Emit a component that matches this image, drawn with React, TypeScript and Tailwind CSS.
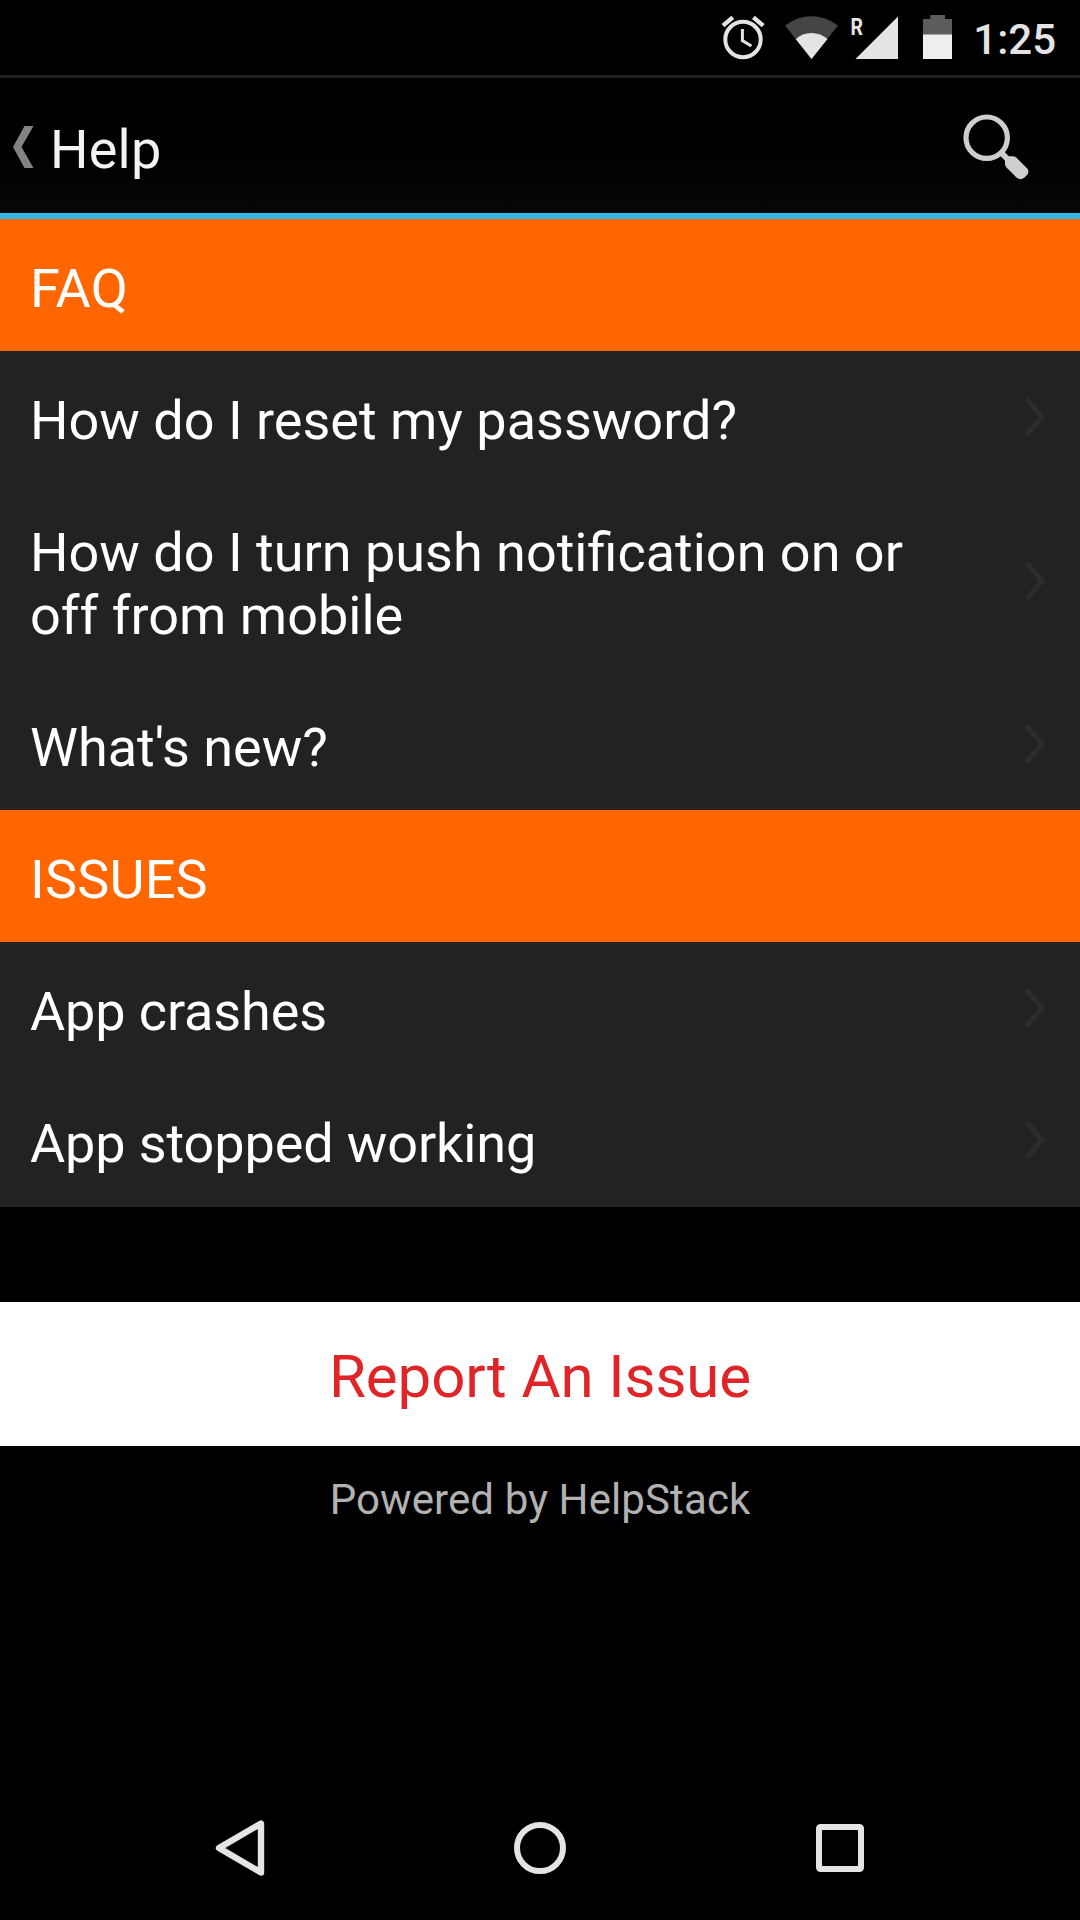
import React from "react";

function StatusBar() {
  return (
    <div className="flex h-[75px] justify-end bg-black">
      <svg className="h-[75px] w-[240px]" viewBox="0 0 240 75">
        {/* alarm */}
        <circle cx="23" cy="39.5" r="17.7" fill="none" stroke="#e4e4e4" strokeWidth="4" />
        <path d="M22.4 29v11.6l9 5.4" fill="none" stroke="#e4e4e4" strokeWidth="3" />
        <path d="M3 25.600L12.800 17.400M43.200 25.600L33.400 17.400" stroke="#e4e4e4" strokeWidth="4.4" />
        {/* wifi */}
        <path d="M91.5 59L65 25.5Q77.500 16.300 91.500 16.300Q105.500 16.300 118 25.500Z" fill="#454545" />
        <path d="M91.5 59L75.700 39Q82.500 33 91.500 33Q100.500 33 107.500 39Z" fill="#e4e4e4" />
        {/* signal */}
        <path d="M135.500 59L178 16.500V59Z" fill="#e4e4e4" />
        {/* battery */}
        <path d="M203 19h7.300v-4h14.700v4h7V35h-29Z" fill="#5c5c5c" />
        <path d="M203 34.500h29V59h-29Z" fill="#eeeeee" />
        <text x="130.500" y="35" fontFamily="Roboto" fontWeight="700" fontSize="24.500" textLength="12.500" lengthAdjust="spacingAndGlyphs" fill="#e4e4e4">R</text>
      </svg>
      <div className="mt-[15px] mr-[24px] ml-[13px] w-[83px] text-right text-[42px] leading-[49px] font-medium text-[#e4e4e4]">1:25</div>
    </div>
  );
}

function ActionBar() {
  return (
    <header className="flex h-[144px] items-start justify-between border-t-[3px] border-b-[6px] border-t-[#202020] border-b-[#33b5e5] bg-linear-to-b from-black to-[#050707]">
      <div className="flex items-start">
        <svg className="mt-[48px] ml-[12px] h-[42px] w-[22px]" viewBox="0 0 22 42">
          <path d="M12.500 0H21.500L9.500 21L21.500 42H12.500L1 21Z" fill="#838383" />
        </svg>
        <h1 className="mt-[40px] ml-[16px] text-[54px] leading-[63px] tracking-[0.2px] text-[#f3f3f3]">Help</h1>
      </div>
      <svg className="mt-[34px] mr-[48px] h-[72px] w-[72px]" viewBox="0 0 72 72" aria-label="Search">
        <circle cx="26.700" cy="25.700" r="20.700" fill="none" stroke="#cecece" strokeWidth="5.200" />
        <path d="M40 39.500L50 49.500" stroke="#cecece" strokeWidth="6" />
        <path d="M46.500 45.500Q48 44.200 50 44.200H53Q55 44.200 56.500 45.700L67 56.200Q69.500 59 67.500 62.500L64.500 65.500Q60.500 68.500 57 66L46.500 55.500Q45 54 45 52V49Q45 47 46.500 45.500Z" fill="#cecece" />
      </svg>
    </header>
  );
}

function SectionHeader({ title }: { title: string }) {
  return (
    <h2 className="h-[132px] bg-[#ff6600] px-[30px] pt-[38px] text-[54px] leading-[63px] tracking-[0.2px] text-white">{title}</h2>
  );
}

function Row({ title, tight }: { title: string; tight?: boolean }) {
  return (
    <li className="flex items-center justify-between bg-[#222222] pr-[34px] pl-[30px]">
      <span className={`w-[910px] pt-[38px] pb-[31px] text-[54px] leading-[63px] text-white ${tight ? "tracking-[-0.12px]" : ""}`}>{title}</span>
      <svg className="h-[40px] w-[22px]" viewBox="0 0 22 40">
        <path d="M2.500 2L18 20L2.500 38" fill="none" stroke="#2c2c2c" strokeWidth="5" />
      </svg>
    </li>
  );
}

const sections = [
  {
    title: "FAQ",
    tight: false,
    items: ["How do I reset my password?", "How do I turn push notification on or off from mobile", "What's new?"],
  },
  { title: "ISSUES", tight: true, items: ["App crashes", "App stopped working"] },
];

function NavBar() {
  return (
    <nav className="flex h-[144px] items-center justify-center gap-[200px]">
      <svg className="h-[100px] w-[100px]" viewBox="0 0 100 100">
        <path d="M71 25.500V74.500L29 50Z" fill="none" stroke="#e4e4e4" strokeWidth="6.400" strokeLinejoin="round" />
      </svg>
      <svg className="h-[100px] w-[100px]" viewBox="0 0 100 100">
        <circle cx="50" cy="50" r="23" fill="none" stroke="#e4e4e4" strokeWidth="6" />
      </svg>
      <svg className="h-[100px] w-[100px]" viewBox="0 0 100 100">
        <rect x="29" y="29" width="42" height="42" rx="1.500" fill="none" stroke="#e4e4e4" strokeWidth="6" />
      </svg>
    </nav>
  );
}

export default function App() {
  return (
    <div className="flex h-[1920px] w-[1080px] flex-col bg-black font-['Roboto',sans-serif]">
      <StatusBar />
      <ActionBar />
      <main className="flex-1">
        {sections.map((s) => (
          <section key={s.title}>
            <SectionHeader title={s.title} />
            <ul>
              {s.items.map((t) => (
                <Row key={t} title={t} tight={s.tight} />
              ))}
            </ul>
          </section>
        ))}
        <div className="h-px bg-[#222222]" />
        <button className="mt-[95px] block h-[144px] w-full bg-white pt-[3px] text-center text-[60px] leading-[144px] tracking-[-0.08px] text-[#e02529]">Report An Issue</button>
        <p className="mt-[29px] text-center text-[42px] leading-[49px] tracking-[0.1px] text-[#b2b2b2]">Powered by HelpStack</p>
      </main>
      <NavBar />
    </div>
  );
}
